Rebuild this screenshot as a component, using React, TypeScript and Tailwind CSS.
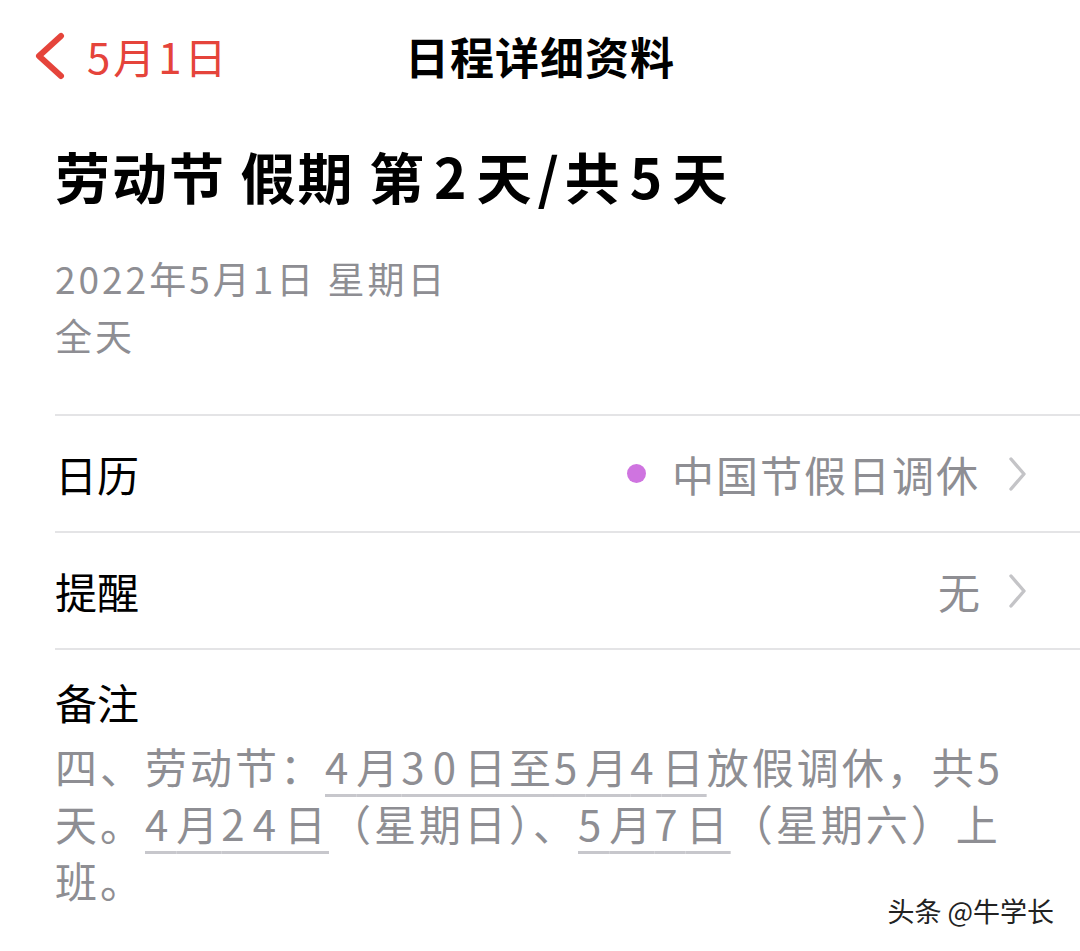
const font = { fontFamily: '"Noto Sans CJK SC", "Noto Sans", sans-serif' };

function Chevron() {
  return (
    <svg width="20" height="36" viewBox="0 0 20 36" className="ml-[28px]" fill="none">
      <polyline points="3,3 16,18 3,33" stroke="#c4c4c7" strokeWidth="3.4" strokeLinecap="round" strokeLinejoin="round" />
    </svg>
  );
}

function Row({ label, children }: { label: string; children?: React.ReactNode }) {
  return (
    <div className="flex h-[117px] items-center justify-between border-b-2 border-[#e4e4e6] pr-[52px]">
      <span className="text-[42px] text-black">{label}</span>
      <div className="flex items-center">{children}</div>
    </div>
  );
}

const link = "underline decoration-[#c7c7cc] decoration-[3px] underline-offset-[10px]";
const num = "tracking-[8px]";

export default function App() {
  return (
    <div className="relative h-[951px] w-[1080px] overflow-hidden bg-white" style={font}>
      {/* Nav bar */}
      <div className="relative flex h-[112px] items-center">
        <div className="flex items-center pl-[33px] text-[#e5443b]">
          <svg width="34" height="48" viewBox="0 0 34 48" fill="none">
            <polyline points="28,4 6,24 28,44" stroke="#e5443b" strokeWidth="6" strokeLinecap="round" strokeLinejoin="round" />
          </svg>
          <span className="ml-[20px] text-[42px] leading-none tracking-[3px]">5月1日</span>
        </div>
        <div className="absolute left-0 right-0 top-0 flex h-[112px] items-center justify-center">
          <span className="text-[44px] font-bold tracking-[1px] text-black">日程详细资料</span>
        </div>
      </div>

      <div className="pl-[55px]">
        {/* Title */}
        <h1 className="mt-[18px] text-[55px] font-bold leading-[90px] tracking-[2px] text-black">
          劳动节 假期 第<span className="px-[8px]">2</span>天<span className="px-[4px]">/</span>共<span className="px-[8px]">5</span>天
        </h1>

        <div className="mt-[30px] text-[37px] leading-[57px] tracking-[3px] text-[#8e8e93]">
          <div>2022年5月1日 星期日</div>
          <div>全天</div>
        </div>

        <div className="mt-[50px] border-b-2 border-[#e4e4e6]" />

        <Row label="日历">
          <span className="mr-[26px] h-[19px] w-[19px] rounded-full bg-[#cf74e0]" />
          <span className="text-[42px] tracking-[2px] text-[#8e8e93]">中国节假日调休</span>
          <Chevron />
        </Row>
        <Row label="提醒">
          <span className="text-[42px] text-[#8e8e93]">无</span>
          <Chevron />
        </Row>

        <div className="pr-[64px] pt-[22px]">
          <div className="text-[42px] leading-[60px] text-black">备注</div>
          <p className="mt-[5px] text-[42px] leading-[57px] tracking-[3px] text-[#8e8e93]">
            四、劳动节：
            <span className={link}>
              <span className={num}>4</span>月<span className={num}>30</span>日至<span className={num}>5</span>月<span className={num}>4</span>日
            </span>
            放假调休，共<span className={num}>5</span>天。
            <span className={link}>
              <span className={num}>4</span>月<span className={num}>24</span>日
            </span>
            （星期日）、
            <span className={link}>
              <span className={num}>5</span>月<span className={num}>7</span>日
            </span>
            （星期六）上班。
          </p>
        </div>
      </div>

      <div
        className="absolute bottom-[20px] right-[26px] text-[27px] text-[#222]"
        style={{ textShadow: "0 0 2px #fff, 0 0 2px #fff" }}
      >
        头条 @牛学长
      </div>
    </div>
  );
}
